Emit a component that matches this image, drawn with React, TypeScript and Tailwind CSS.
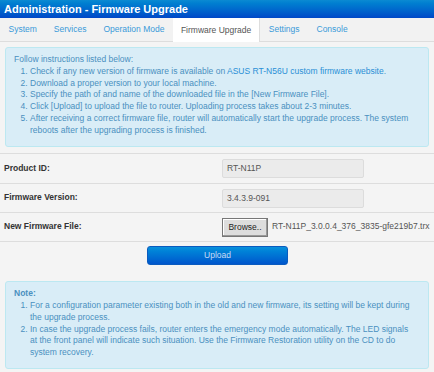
import React from "react";

const tabs = ["System", "Services", "Operation Mode", "Firmware Upgrade", "Settings", "Console"];

export default function App() {
  return (
    <div className="w-[434px] h-[372px] bg-[#f4f4f4] overflow-hidden text-[8.5px] leading-[11.75px]" style={{ fontFamily: '"Liberation Sans", Arial, sans-serif' }}>
      <div className="h-[18px] bg-gradient-to-b from-[#0b8ad2] to-[#0047c7] text-white font-bold text-[11px] leading-[18px] pl-[4px]">
        Administration - Firmware Upgrade
      </div>
      <div className="h-[24px] bg-[#f2f2f2] border-b border-[#dddddd] flex items-end pl-[0px]">
        {tabs.map((t) => (
          <div
            key={t}
            className={
              t === "Firmware Upgrade"
                ? "h-[24px] px-[8px] bg-white text-[#555555] border-r border-[#dddddd] leading-[25px] -mb-px"
                : "h-[24px] px-[8.5px] text-[#3a9ad9] leading-[25px]"
            }
          >
            {t}
          </div>
        ))}
      </div>
      <div className="mx-[5px] mt-[5px] bg-[#d9edf7] border border-[#bce8f1] rounded-[3px] text-[#4a90c0] pl-[8px] pt-[6px] pb-[10px]">
        <div>Follow instructions listed below:</div>
        <ol className="pl-[16px] list-decimal">
          <li>
            Check if any new version of firmware is available on{" "}
            <span className="text-[#2a8fd6]">ASUS RT-N56U custom firmware website</span>.
          </li>
          <li>Download a proper version to your local machine.</li>
          <li>Specify the path of and name of the downloaded file in the [New Firmware File].</li>
          <li>Click [Upload] to upload the file to router. Uploading process takes about 2-3 minutes.</li>
          <li className="pr-[12px]">
            After receiving a correct firmware file, router will automatically start the upgrade process. The system reboots after the upgrading process is finished.
          </li>
        </ol>
      </div>
      <div className="mt-[6px] border-t border-[#dddddd]">
        <div className="h-[30px] border-b border-[#dddddd] flex items-center">
          <div className="w-[222px] pl-[4px] font-bold text-[#333333]">Product ID:</div>
          <div className="w-[142px] h-[19px] bg-[#ebebeb] border border-[#dcdcdc] rounded-[2px] text-[#555555] pl-[4px] leading-[17px]">RT-N11P</div>
        </div>
        <div className="h-[29px] border-b border-[#dddddd] flex items-center">
          <div className="w-[222px] pl-[4px] font-bold text-[#333333]">Firmware Version:</div>
          <div className="w-[142px] h-[19px] bg-[#ebebeb] border border-[#dcdcdc] rounded-[2px] text-[#555555] pl-[4px] leading-[17px]">3.4.3.9-091</div>
        </div>
        <div className="h-[29px] border-b border-[#dddddd] flex items-center">
          <div className="w-[222px] pl-[4px] font-bold text-[#333333]">New Firmware File:</div>
          <div className="w-[46px] h-[19px] bg-[#dddddd] border border-[#777777] text-[#222222] text-center leading-[17px] shadow-[inset_-1px_-1px_0_#999,inset_1px_1px_0_#fff]">Browse..</div>
          <div className="pl-[4px] text-[#555555]">RT-N11P_3.0.0.4_376_3835-gfe219b7.trx</div>
        </div>
      </div>
      <div className="flex justify-center pt-[4px] pl-[1px]">
        <div className="w-[141px] h-[19px] rounded-[3px] bg-gradient-to-b from-[#0a90db] to-[#0055cc] border border-[#0a5bbf] text-[#c8dcf4] text-center leading-[17px]">Upload</div>
      </div>
      <div className="mx-[5px] mt-[16px] bg-[#d9edf7] border border-[#bce8f1] rounded-[3px] text-[#4a90c0] pl-[8px] pt-[6px] pb-[9px]">
        <div className="font-bold">Note:</div>
        <ol className="pl-[16px] list-decimal pr-[12px]">
          <li>For a configuration parameter existing both in the old and new firmware, its setting will be kept during the upgrade process.</li>
          <li>
            In case the upgrade process fails, router enters the emergency mode automatically. The LED signals at the front panel will indicate such situation. Use the Firmware Restoration utility on the CD to do system recovery.
          </li>
        </ol>
      </div>
    </div>
  );
}
